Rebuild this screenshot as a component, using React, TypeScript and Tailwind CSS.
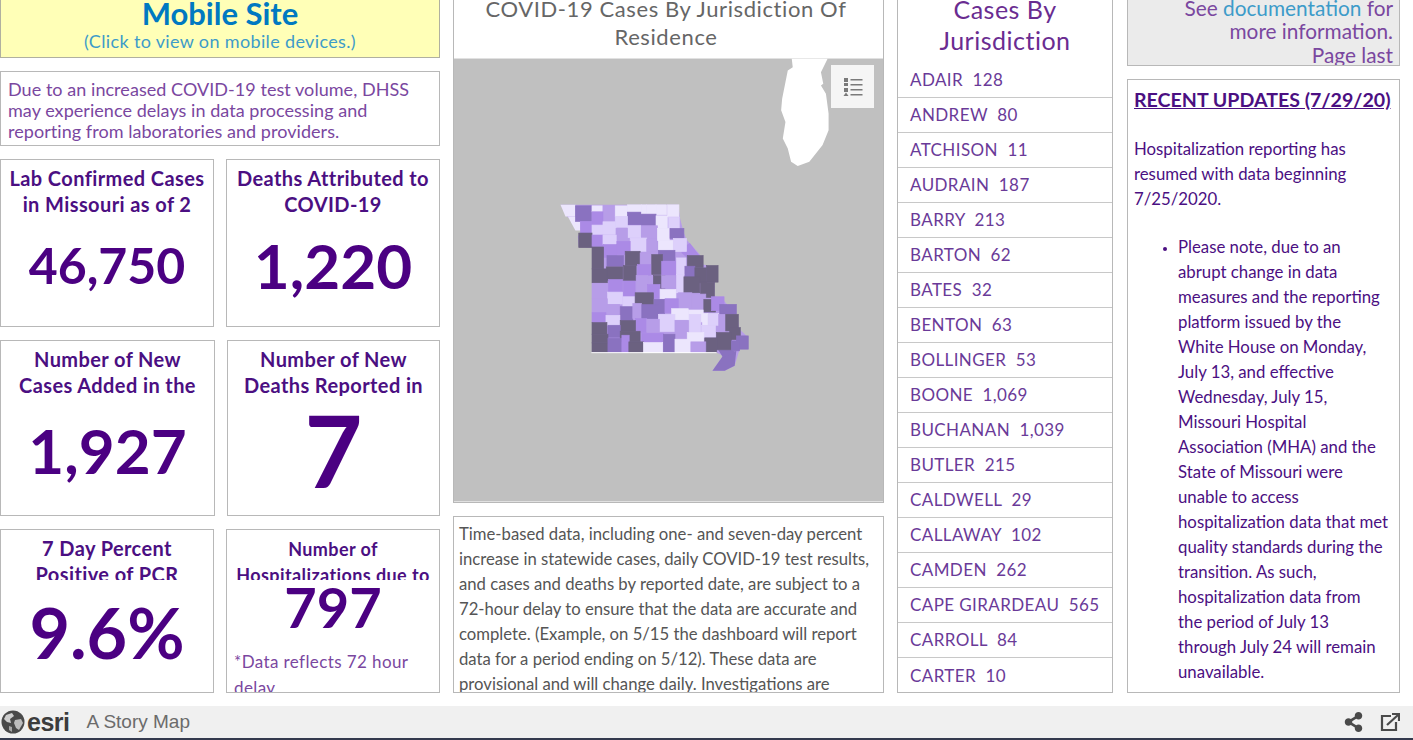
import { FaShareAlt } from 'react-icons/fa';

const L0 = '#ece6fd';
const L1 = '#ddd0fb';
const L2 = '#b79de8';
const L3 = '#ab8ae6';
const L4 = '#8a72c0';
const DK = '#6b6180';

// x, y, w, h, colour, in the coordinates of the zoomed map
const counties: [number, number, number, number, string][] = [
  [105, 48, 48, 47, L4], [155, 48, 32, 18, L0], [188, 48, 37, 47, L2], [225, 48, 37, 32, L0],
  [262, 45, 42, 22, L0], [262, 67, 42, 38, L4], [304, 45, 16, 28, L0], [320, 45, 28, 28, L0],
  [348, 45, 32, 30, L0], [382, 45, 35, 36, L0], [155, 66, 33, 40, L3], [304, 73, 44, 34, L4],
  [348, 78, 34, 38, L0], [386, 82, 32, 34, L1], [120, 95, 34, 35, L3], [225, 80, 37, 34, L1],
  [188, 96, 37, 38, L1], [155, 106, 33, 30, L1], [262, 108, 40, 36, L1], [304, 108, 48, 40, L2],
  [230, 115, 32, 38, L2], [352, 116, 36, 36, L0], [390, 116, 42, 30, L4], [115, 130, 40, 44, DK],
  [155, 136, 33, 34, L3], [188, 136, 40, 28, L1], [270, 145, 50, 40, L1], [320, 148, 30, 40, L2],
  [355, 152, 45, 30, L0], [400, 146, 40, 40, L1], [190, 165, 40, 38, L3], [230, 155, 40, 40, L3],
  [155, 172, 35, 66, DK], [255, 185, 45, 42, DK], [200, 198, 50, 32, L4], [300, 190, 35, 35, L2],
  [355, 182, 50, 32, L4], [335, 195, 32, 60, DK], [442, 198, 48, 36, DK], [410, 205, 28, 50, L1],
  [292, 225, 40, 32, L3], [365, 215, 42, 52, L3], [198, 232, 50, 40, DK], [250, 228, 38, 45, DK],
  [155, 238, 46, 42, DK], [435, 230, 30, 35, L4], [465, 235, 35, 45, DK], [500, 228, 35, 50, DK],
  [340, 258, 35, 38, DK], [288, 258, 35, 50, L2], [205, 270, 42, 40, L3], [250, 275, 35, 48, L3],
  [365, 258, 42, 38, L2], [410, 255, 22, 55, L1], [432, 262, 48, 48, DK], [482, 278, 42, 46, DK],
  [155, 282, 46, 45, L2], [322, 285, 38, 42, L3], [360, 300, 48, 28, L0], [202, 308, 45, 36, L1],
  [248, 322, 36, 30, L1], [285, 310, 55, 36, DK], [416, 310, 40, 48, L2], [456, 314, 42, 44, L2],
  [155, 328, 46, 42, L2], [342, 330, 32, 42, L4], [375, 328, 40, 42, L3], [200, 345, 38, 30, L2],
  [240, 352, 38, 42, L4], [278, 342, 26, 46, L2], [305, 346, 50, 42, L4], [492, 330, 35, 38, DK],
  [515, 322, 38, 42, L3], [540, 345, 50, 30, L4], [395, 358, 50, 34, L0], [155, 370, 42, 30, L3],
  [197, 378, 42, 30, L1], [445, 362, 45, 36, L0], [355, 375, 50, 52, L1], [286, 388, 34, 42, L3],
  [320, 390, 38, 40, L2], [240, 394, 46, 32, DK], [505, 372, 32, 36, L1], [488, 372, 16, 36, L0],
  [537, 375, 22, 55, L2], [558, 375, 38, 50, DK], [405, 393, 50, 56, L2], [448, 375, 35, 55, L1],
  [155, 400, 45, 35, DK], [203, 408, 37, 36, L4], [485, 408, 42, 36, L1], [155, 435, 48, 26, DK],
  [305, 432, 65, 30, L3], [570, 415, 32, 36, DK], [442, 430, 50, 30, L0], [530, 430, 45, 52, DK],
  [240, 426, 60, 32, DK], [370, 435, 35, 55, L4], [590, 440, 36, 40, L4], [495, 446, 36, 44, DK],
  [155, 461, 48, 29, DK], [203, 447, 42, 43, L4], [245, 438, 22, 52, L3], [266, 458, 44, 32, DK],
  [310, 460, 58, 30, L0], [405, 450, 48, 40, L0], [453, 458, 45, 32, L2], [575, 455, 25, 30, L4],
];

const jurisdictions = [
  'ADAIR  128', 'ANDREW  80', 'ATCHISON  11', 'AUDRAIN  187', 'BARRY  213', 'BARTON  62',
  'BATES  32', 'BENTON  63', 'BOLLINGER  53', 'BOONE  1,069', 'BUCHANAN  1,039', 'BUTLER  215',
  'CALDWELL  29', 'CALLAWAY  102', 'CAMDEN  262', 'CAPE GIRARDEAU  565', 'CARROLL  84', 'CARTER  10',
];

const box = 'border border-[#b8b8b8] bg-white overflow-hidden';
const title = 'text-center font-bold text-[#4b0f82] text-[20px] leading-[26px] tracking-[0.4px] overflow-hidden whitespace-nowrap';
const bigNum = 'text-center text-[#4b0082] font-bold';

function MapDrawing() {
  return (
    <svg viewBox="0 0 431 445" className="w-full h-full block">
      <rect width="431" height="445" fill="#c0c0c0" />
      <g transform="translate(307 -8) scale(0.3333)" className="blur-[0.4px]">
        <path
          d="M97 25 L205 25 L185 65 L192 100 L185 105 L200 130 L208 190 L208 240 L190 285 L150 335 L115 348 L95 335 L85 295 L70 265 L78 215 L65 180 L68 145 L85 60 L100 50 Z"
          fill="#fff"
        />
      </g>
      <g transform="translate(87 132) scale(0.3333)" className="blur-[0.5px]">
        <path
          d="M60 45 L415 45 L420 85 L432 130 L440 150 L480 195 L490 225 L535 235 L525 280 L524 320 L553 335 L590 375 L600 420 L626 445 L600 480 L585 530 L555 545 L518 545 L550 500 L530 490 L155 490 L155 175 L115 170 L112 140 L125 125 L80 80 Z"
          fill={L2}
        />
        <path d="M60 45 L105 45 L105 80 L75 80 Z" fill={L0} />
        <path d="M82 80 L120 80 L120 122 L105 122 Z" fill={L0} />
        <path d="M425 175 L450 160 L480 200 L442 205 L425 190 Z" fill={L3} />
        <path d="M518 545 L550 500 L590 485 L585 530 L555 545 Z" fill={L4} />
        <path d="M535 482 L575 482 L590 490 L550 505 Z" fill={L4} />
        {counties.map(([x, y, w, h, c], i) => (
          <rect key={i} x={x} y={y} width={w} height={h} fill={c} stroke={c} strokeWidth="2" />
        ))}
        <rect x="153" y="489" width="378" height="3" fill="#fff" />
      </g>
    </svg>
  );
}

function Globe() {
  return (
    <svg viewBox="0 0 24 24" className="w-[24px] h-[24px] shrink-0">
      <circle cx="12" cy="12" r="11.5" fill="#4a4a4a" />
      <path d="M5 5 L11 3 L13 6 L9 9 L10 13 L6 12 L3 9 Z" fill="#cfcfcf" />
      <path d="M14 10 L20 9 L22 13 L18 20 L15 18 L13 13 Z" fill="#bdbdbd" />
      <path d="M8 16 L11 17 L11 22 L8 20 Z" fill="#a8a8a8" />
    </svg>
  );
}

export default function App() {
  return (
    <div className="h-screen w-screen overflow-hidden flex flex-col bg-white" style={{ fontFamily: 'Lato, "Open Sans", sans-serif' }}>
      <div className="h-[706px] shrink-0 flex gap-[13px] pb-[13px] pr-[13px] overflow-hidden">
        {/* left column */}
        <div className="w-[440px] shrink-0 flex flex-col gap-[13px]">
          <div className="h-[58px] shrink-0 border border-t-0 border-[#b0b0a0] bg-[#ffffb7] flex flex-col items-center justify-end pb-[5px]">
            <div className="text-[31px] leading-[34px] font-bold text-[#0079c1]">Mobile Site</div>
            <div className="text-[18px] leading-[22px] text-[#3d9bc9] tracking-[0.35px]">(Click to view on mobile devices.)</div>
          </div>
          <div className={`${box} h-[75px] shrink-0 px-[7px] pt-[7px] text-[18px] leading-[21px] tracking-[0.05px] text-[#7a479f]`}>
            Due to an increased COVID-19 test volume, DHSS may experience delays in data processing and reporting from laboratories and providers.
          </div>
          <div className="h-[168px] shrink-0 flex gap-[12px]">
            <div className={`${box} w-[214px] shrink-0 pt-[5px]`}>
              <div className={`${title} h-[47px]`}>Lab Confirmed Cases<br />in Missouri as of 2</div>
              <div className={`${bigNum} text-[50px] leading-[60px] mt-[23px]`}>46,750</div>
            </div>
            <div className={`${box} flex-1 pt-[5px]`}>
              <div className={`${title} h-[47px]`}>Deaths Attributed to<br />COVID-19</div>
              <div className={`${bigNum} text-[62px] leading-[70px] mt-[18px]`}>1,220</div>
            </div>
          </div>
          <div className="h-[176px] shrink-0 flex gap-[12px]">
            <div className={`${box} w-[215px] shrink-0 pt-[5px]`}>
              <div className={`${title} h-[50px]`}>Number of New<br />Cases Added in the</div>
              <div className={`${bigNum} text-[62px] leading-[70px] mt-[19px]`}>1,927</div>
            </div>
            <div className={`${box} flex-1 pt-[5px]`}>
              <div className={`${title} h-[50px]`}>Number of New<br />Deaths Reported in</div>
              <div className={`${bigNum} text-[100px] leading-[100px] mt-[3px]`}>7</div>
            </div>
          </div>
          <div className="h-[164px] shrink-0 flex gap-[12px]">
            <div className={`${box} w-[214px] shrink-0 pt-[5px]`}>
              <div className={`${title} h-[45px]`}>7 Day Percent<br />Positive of PCR</div>
              <div className={`${bigNum} text-[70px] leading-[80px] mt-[12px]`}>9.6%</div>
            </div>
            <div className={`${box} flex-1 pt-[6px]`}>
              <div className={`${title} !text-[18px] h-[44px]`}>Number of<br />Hospitalizations due to</div>
              <div className={`${bigNum} text-[56px] leading-[60px] -mt-[3px]`}>797</div>
              <div className="px-[7px] mt-[12px] text-[17px] leading-[26px] tracking-[0.4px] text-[#7a479f]">*Data reflects 72 hour delay</div>
            </div>
          </div>
        </div>

        {/* map column */}
        <div className="w-[431px] shrink-0 flex flex-col gap-[13px]">
          <div className="h-[503px] shrink-0 border border-t-0 border-[#b8b8b8] flex flex-col">
            <div className="h-[58px] shrink-0 bg-white flex flex-col justify-end pb-[7px] pr-[5px] text-center text-[22px] leading-[28px] text-[#666] tracking-[0.6px]">
              <div>COVID-19 Cases By Jurisdiction Of</div>
              <div>Residence</div>
            </div>
            <div className="flex-1 relative overflow-hidden">
              <MapDrawing />
              <div className="absolute top-[7px] right-[9px] w-[43px] h-[43px] bg-[#f5f5f5] flex items-center justify-center">
                <svg viewBox="0 0 20 20" className="w-[20px] h-[20px]" fill="#7a7a7a">
                  <rect x="1" y="1" width="4" height="4" />
                  <rect x="1" y="6" width="4" height="3" />
                  <rect x="1" y="11" width="4" height="4" />
                  <path d="M3 15.500 L5.500 19 L0.500 19 Z" />
                  <rect x="7.500" y="2" width="12" height="1.500" />
                  <rect x="7.500" y="7" width="12" height="1.500" />
                  <rect x="7.500" y="12" width="12" height="1.500" />
                  <rect x="7.500" y="17" width="12" height="1.500" />
                </svg>
              </div>
            </div>
          </div>
          <div className={`${box} flex-1 px-[5px] pt-[5px] text-[16.700px] leading-[25px] text-[#555]`}>
            Time-based data, including one- and seven-day percent increase in statewide cases, daily COVID-19 test results, and cases and deaths by reported date, are subject to a 72-hour delay to ensure that the data are accurate and complete. (Example, on 5/15 the dashboard will report data for a period ending on 5/12). These data are provisional and will change daily. Investigations are
          </div>
        </div>

        {/* jurisdiction list */}
        <div className="w-[216px] shrink-0 border border-t-0 border-[#b8b8b8] overflow-hidden flex flex-col">
          <div className="h-[63px] shrink-0 flex flex-col justify-end pb-[7px] text-center text-[25px] leading-[31px] text-[#6a2c91] tracking-[0.5px]">
            <div>Cases By</div>
            <div>Jurisdiction</div>
          </div>
          {jurisdictions.map((row) => (
            <div
              key={row}
              className="h-[35px] shrink-0 pl-[12px] flex items-center border-b border-[#c8c8c8] last:border-b-0 text-[17px] text-[#6a3a98] tracking-[0.4px] whitespace-pre"
            >
              {row}
            </div>
          ))}
        </div>

        {/* right column */}
        <div className="w-[273px] ml-px shrink-0 flex flex-col gap-[13px]">
          <div className="h-[66px] shrink-0 border border-t-0 border-[#b8b8b8] bg-[#ebebeb] flex flex-col justify-end items-end px-[6px] text-[20.800px] leading-[23.500px] text-[#7a479f] overflow-hidden">
            <div>See <span className="text-[#3d9bc9]">documentation</span> for</div>
            <div>more information.</div>
            <div className="-mb-[1px]">Page last</div>
          </div>
          <div className={`${box} flex-1 pl-[6px] pr-[6px] pt-[7px] text-[#4b0f82]`}>
            <div className="text-[19.600px] leading-[26px] font-bold underline whitespace-nowrap">RECENT UPDATES (7/29/20)</div>
            <p className="mt-[23px] text-[16.800px] leading-[25px]">
              Hospitalization reporting has resumed with data beginning 7/25/2020.
            </p>
            <ul className="mt-[23px] ml-[44px] mr-[4px] list-disc text-[16.800px] leading-[25px]">
              <li className="marker:text-[13px]">
                Please note, due to an abrupt change in data measures and the reporting platform issued by the White House on Monday, July 13, and effective Wednesday, July 15, Missouri Hospital Association (MHA) and the State of Missouri were unable to access hospitalization data that met quality standards during the transition. As such, hospitalization data from the period of July 13 through July 24 will remain unavailable.
              </li>
            </ul>
          </div>
        </div>
      </div>

      {/* footer */}
      <div className="h-[32px] shrink-0 bg-[#f0f0f0] flex items-center pl-[1px] pr-[13px]">
        <Globe />
        <span className="ml-[2px] text-[25px] leading-none font-bold text-[#3c3c3c] tracking-[-0.5px]" style={{ fontFamily: '"Liberation Sans", sans-serif' }}>esri</span>
        <span className="ml-[17px] text-[19px] text-[#6b6b6b]" style={{ fontFamily: '"Liberation Sans", sans-serif' }}>A Story Map</span>
        <FaShareAlt className="ml-auto text-[#4a4a4a] w-[19px] h-[20px]" />
        <svg viewBox="0 0 20 20" className="ml-[17px] w-[20px] h-[20px]" fill="none" stroke="#4a4a4a" strokeWidth="2.200">
          <path d="M11 4 L2 4 L2 18 L16 18 L16 10" />
          <path d="M7 13 L18 3" />
          <path d="M12 2 L19 2 L19 9" fill="none" />
        </svg>
      </div>
      <div className="flex-1 bg-[#343a4e]" />
    </div>
  );
}
